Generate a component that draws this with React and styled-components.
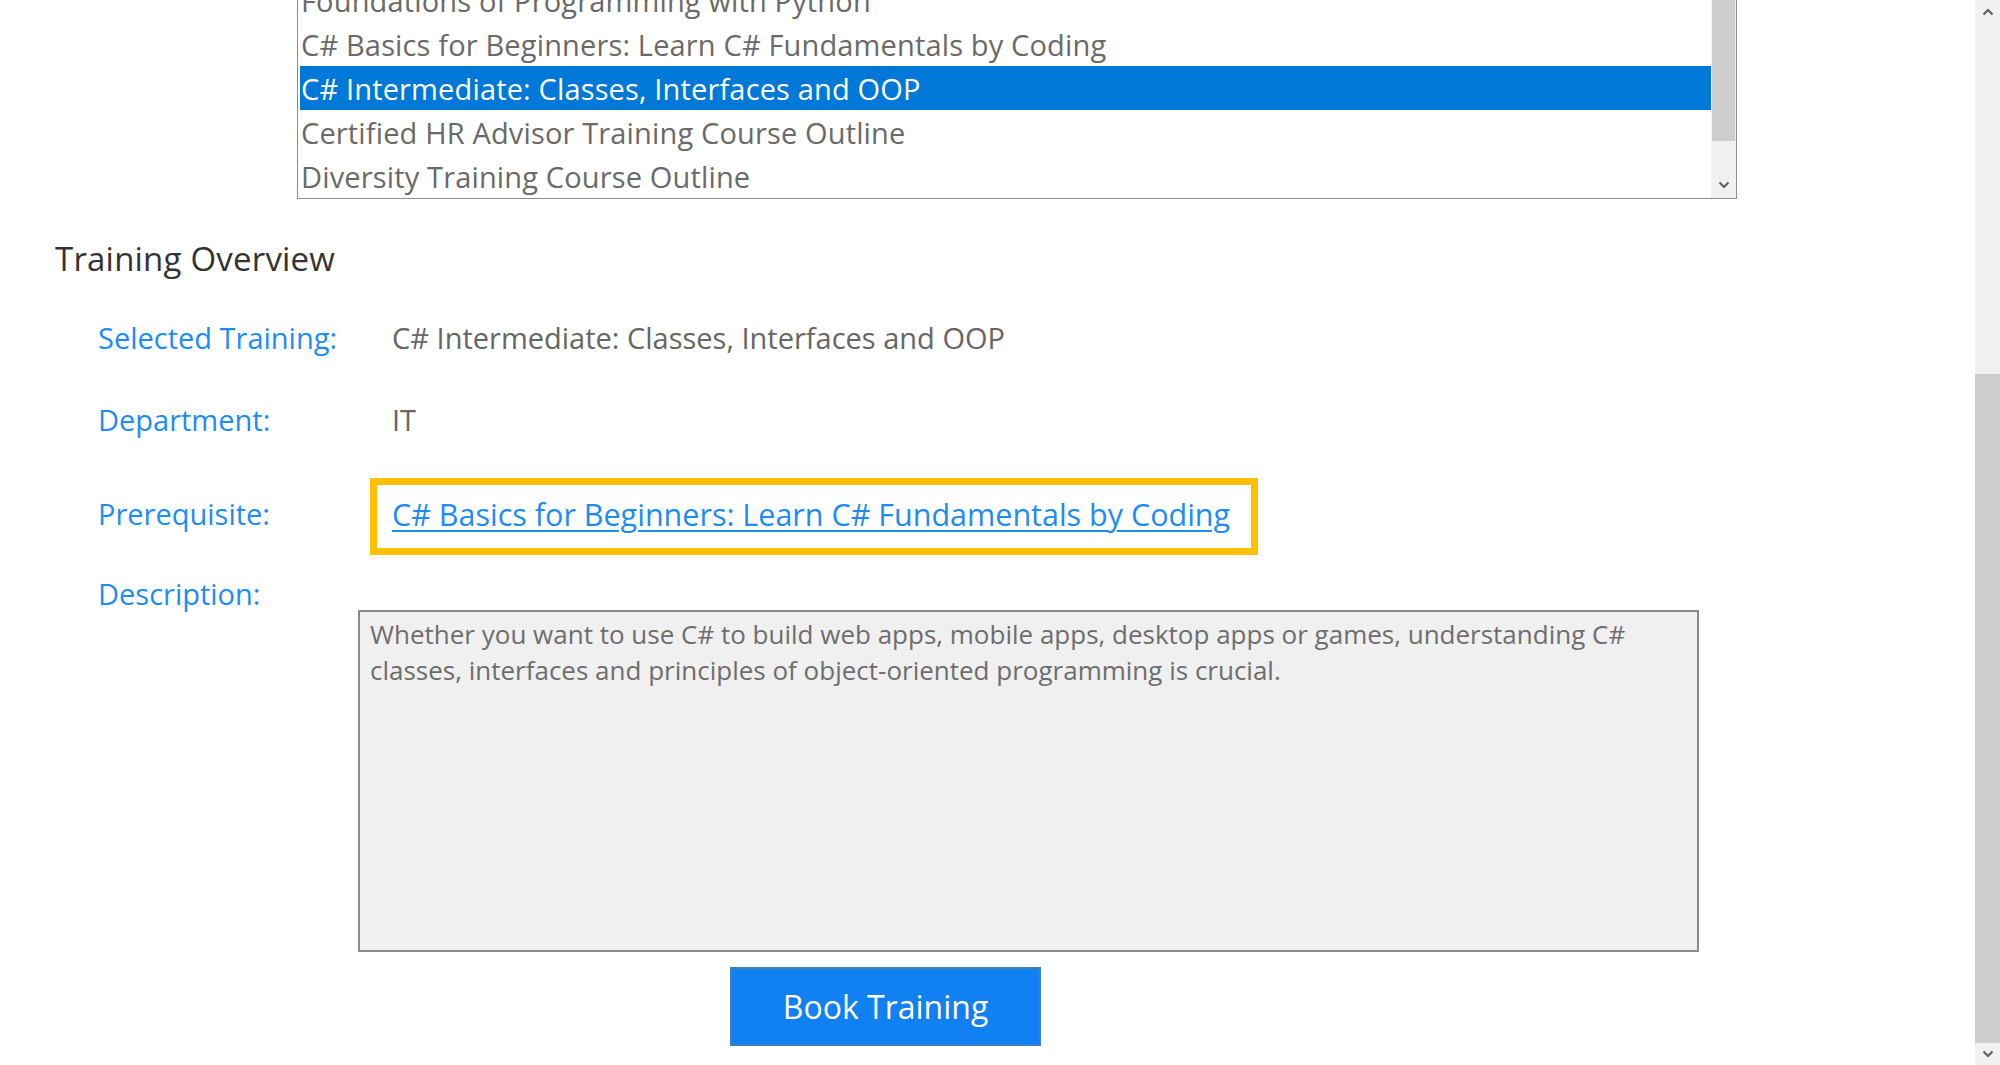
import React from "react";
import styled, { createGlobalStyle } from "styled-components";

const GlobalStyle = createGlobalStyle`
  html, body { margin: 0; padding: 0; background: #fff; overflow: hidden; }
  body { font-family: "Open Sans", "Noto Sans", sans-serif; }
`;

const Page = styled.div`
  display: flex;
  height: 1065px;
  overflow: hidden;
  background: #fff;
`;

const Main = styled.main`
  flex: 1;
  display: flex;
  flex-direction: column;
  min-width: 0;
`;

/* ---------- list box ---------- */
const ListBox = styled.div`
  display: flex;
  margin: -23px 0 0 297px;
  width: 1440px;
  height: 222px;
  box-sizing: border-box;
  border: 1px solid #8c8c8c;
  background: #fff;
  overflow: hidden;
`;

const Options = styled.ul`
  flex: 1;
  list-style: none;
  margin: 0;
  padding: 0 0 0 2px;
  display: flex;
  flex-direction: column;
`;

const Option = styled.li`
  height: 44px;
  flex: none;
  display: flex;
  align-items: center;
  padding-left: 1px;
  font-size: 29px;
  letter-spacing: 0.15px;
  white-space: nowrap;
  color: ${p => (p.$selected ? "#fff" : "#6a6a6a")};
  background: ${p => (p.$selected ? "#0078d7" : "transparent")};
`;

const VScroll = styled.div`
  flex: none;
  width: ${p => p.$w}px;
  display: flex;
  flex-direction: column;
  background: #f0f0f0;
`;

const Thumb = styled.div`
  flex: none;
  height: ${p => p.$h}px;
  margin: 0 ${p => p.$inset}px;
  background: #cdcdcd;
`;

const Track = styled.div`
  flex: ${p => (p.$h ? `0 0 ${p.$h}px` : "1")};
`;

const ArrowBtn = styled.div`
  flex: none;
  height: ${p => p.$h}px;
  display: flex;
  align-items: center;
  justify-content: center;
`;

const Chevron = ({ up }) => (
  <svg width="12" height="8" viewBox="0 0 12 8">
    <polyline
      points={up ? "1.5,6.5 6,2 10.5,6.5" : "1.5,1.5 6,6 10.5,1.5"}
      fill="none"
      stroke="#5f5f5f"
      strokeWidth="2.2"
    />
  </svg>
);

/* ---------- overview ---------- */
const Heading = styled.h2`
  margin: 39px 0 0 55px;
  font-size: 33px;
  letter-spacing: 0.2px;
  line-height: 42px;
  font-weight: 400;
  color: #333;
`;

const Fields = styled.div`
  display: grid;
  grid-template-columns: 294px 1fr;
  grid-template-rows: 82px 82px 111px 38px;
  margin: 17px 0 0 98px;
`;

const Label = styled.div`
  display: flex;
  align-items: ${p => (p.$bottom ? "flex-end" : "center")};
  padding-bottom: ${p => p.$lift || 0}px;
  font-size: 29px;
  line-height: 32px;
  color: #1e8cf5;
  white-space: nowrap;
`;

const Value = styled.div`
  display: flex;
  align-items: center;
  font-size: 29px;
  line-height: 32px;
  color: #666;
  white-space: nowrap;
`;

const Highlight = styled.div`
  display: inline-flex;
  align-items: center;
  box-sizing: border-box;
  height: 77px;
  margin-left: -22px;
  padding: 0 21px 6px 15px;
  border: 7px solid #ffc000;
`;

const Link = styled.a`
  font-size: 30.5px;
  line-height: 32px;
  color: #1e8cf5;
  text-decoration: underline;
  text-underline-offset: 4px;
  text-decoration-thickness: 2px;
  white-space: nowrap;
  cursor: pointer;
`;

const Description = styled.div`
  margin: 0 0 0 358px;
  width: 1341px;
  height: 342px;
  box-sizing: border-box;
  padding: 4px 10px;
  border: 2px solid #8a8a8a;
  background: #f0f0f0;
  font-size: 26px;
  line-height: 36px;
  color: #6d6d6d;
  white-space: pre;
  overflow: hidden;
`;

const BookButton = styled.button`
  margin: 15px 0 0 730px;
  width: 311px;
  height: 79px;
  box-sizing: border-box;
  border: 2px solid #3f7fc0;
  background: #1080f2;
  color: #fff;
  font-family: "Open Sans", "Noto Sans", sans-serif;
  font-size: 32px;
  cursor: pointer;
`;

const options = [
  "Foundations of Programming with Python",
  "C# Basics for Beginners: Learn C# Fundamentals by Coding",
  "C# Intermediate: Classes, Interfaces and OOP",
  "Certified HR Advisor Training Course Outline",
  "Diversity Training Course Outline",
];

export default function App() {
  return (
    <Page>
      <GlobalStyle />
      <Main>
        <ListBox>
          <Options>
            {options.map((o, i) => (
              <Option key={o} $selected={i === 2}>
                {o}
              </Option>
            ))}
          </Options>
          <VScroll $w={25}>
            <Thumb $h={163} $inset={1} />
            <Track />
            <ArrowBtn $h={26}>
              <Chevron />
            </ArrowBtn>
          </VScroll>
        </ListBox>

        <Heading>Training Overview</Heading>

        <Fields>
          <Label>Selected Training:</Label>
          <Value>C# Intermediate: Classes, Interfaces and OOP</Value>
          <Label>Department:</Label>
          <Value>IT</Value>
          <Label $lift={6}>Prerequisite:</Label>
          <Value>
            <Highlight>
              <Link>C# Basics for Beginners: Learn C# Fundamentals by Coding</Link>
            </Highlight>
          </Value>
          <Label $bottom>Description:</Label>
          <div />
        </Fields>

        <Description>
          {"Whether you want to use C# to build web apps, mobile apps, desktop apps or games, understanding C#\nclasses, interfaces and principles of object-oriented programming is crucial."}
        </Description>

        <BookButton>Book Training</BookButton>
      </Main>

      <VScroll $w={25}>
        <ArrowBtn $h={24}>
          <Chevron up />
        </ArrowBtn>
        <Track $h={350} />
        <Thumb $h={669} $inset={0} />
        <ArrowBtn $h={22}>
          <Chevron />
        </ArrowBtn>
      </VScroll>
    </Page>
  );
}
